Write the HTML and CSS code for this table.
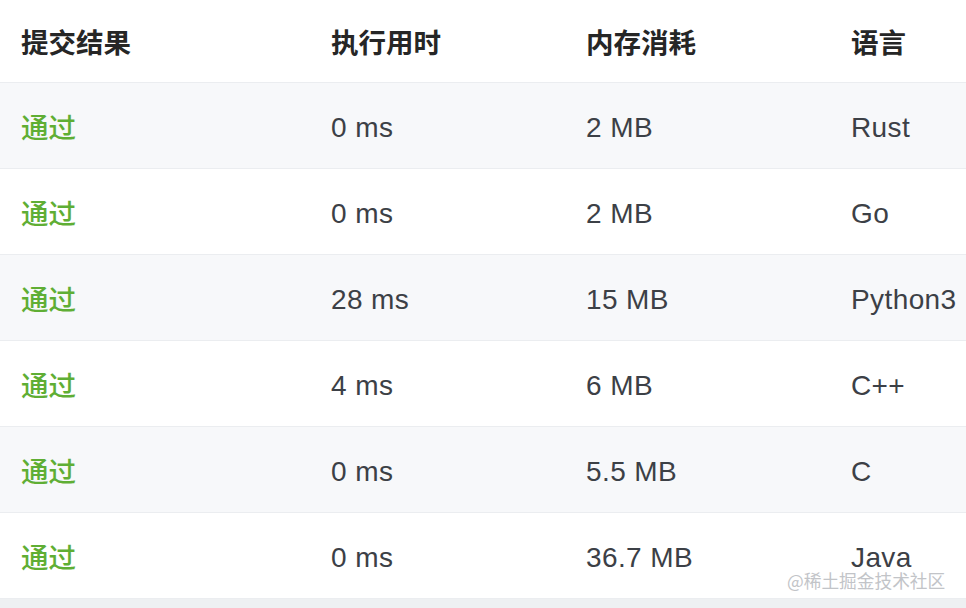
FILE: index.html
```html
<!DOCTYPE html>
<html lang="zh-CN">
<head>
<meta charset="utf-8">
<link rel="stylesheet" href="styles.css">
</head>
<body>
<div class="table">
  <div class="row head">
    <div class="cell">提交结果</div>
    <div class="cell">执行用时</div>
    <div class="cell">内存消耗</div>
    <div class="cell">语言</div>
  </div>
  <div class="row odd">
    <div class="cell ok">通过</div>
    <div class="cell">0 ms</div>
    <div class="cell">2 MB</div>
    <div class="cell">Rust</div>
  </div>
  <div class="row">
    <div class="cell ok">通过</div>
    <div class="cell">0 ms</div>
    <div class="cell">2 MB</div>
    <div class="cell">Go</div>
  </div>
  <div class="row odd">
    <div class="cell ok">通过</div>
    <div class="cell">28 ms</div>
    <div class="cell">15 MB</div>
    <div class="cell">Python3</div>
  </div>
  <div class="row">
    <div class="cell ok">通过</div>
    <div class="cell">4 ms</div>
    <div class="cell">6 MB</div>
    <div class="cell">C++</div>
  </div>
  <div class="row odd">
    <div class="cell ok">通过</div>
    <div class="cell">0 ms</div>
    <div class="cell">5.5 MB</div>
    <div class="cell">C</div>
  </div>
  <div class="row">
    <div class="cell ok">通过</div>
    <div class="cell">0 ms</div>
    <div class="cell">36.7 MB</div>
    <div class="cell">Java</div>
  </div>
  <div class="footer"></div>
</div>
<div class="watermark">@稀土掘金技术社区</div>
</body>
</html>
```
FILE: styles.css
```css
html, body {
  margin: 0;
  padding: 0;
  background: #ffffff;
}
body {
  width: 966px;
  height: 608px;
  overflow: hidden;
  position: relative;
  font-family: "Liberation Sans", "Noto Sans CJK SC", sans-serif;
}
.table {
  display: flex;
  flex-direction: column;
}
.row {
  display: grid;
  grid-template-columns: 310px 255px 265px 1fr;
  height: 85px;
  align-items: center;
  border-bottom: 1px solid #ebedf0;
  font-size: 28px;
  letter-spacing: 0.4px;
  color: #3c4046;
  white-space: nowrap;
}
.row .cell {
  padding-top: 4px;
}
.row.head {
  height: 82px;
  color: #262626;
  font-weight: 700;
  font-family: "Noto Sans CJK SC", sans-serif;
  font-size: 27.5px;
  letter-spacing: 0;
}
.row.head .cell {
  padding-top: 0;
}
.row.odd {
  background: #f7f8fa;
}
.cell {
  padding-left: 21px;
}
.row .ok {
  color: #5fae34;
  font-family: "Noto Sans CJK SC", sans-serif;
  font-size: 27.5px;
  font-weight: 500;
  letter-spacing: 0;
  padding-top: 0;
}
.footer {
  height: 10px;
  background: #eef0f2;
}
.watermark {
  position: absolute;
  left: 787px;
  top: 567px;
  font-size: 17.7px;
  color: #c2c4c8;
  font-family: "Noto Sans CJK SC", sans-serif;
}
```
